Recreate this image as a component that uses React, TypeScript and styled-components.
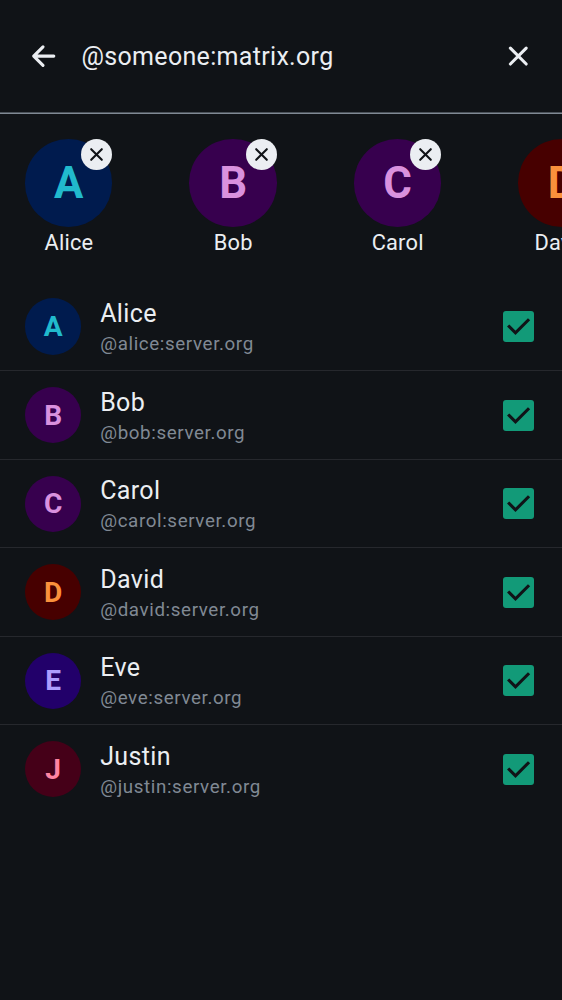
import React from "react";
import styled, { createGlobalStyle } from "styled-components";

const GlobalStyle = createGlobalStyle`
  * { box-sizing: border-box; }
  body {
    margin: 0;
    background: #101317;
    color: #ebeef2;
    font-family: Roboto, "Liberation Sans", sans-serif;
    overflow: hidden;
  }
`;

const Screen = styled.main`
  height: 1000px;
  overflow: hidden;
  display: flex;
  flex-direction: column;
  background: #101317;
`;

const SearchBar = styled.header`
  flex: none;
  height: 114px;
  padding: 0 25px;
  display: flex;
  align-items: center;
  border-bottom: 1px solid #808994;
  box-shadow: inset 0 -1px #4b525a;
`;

const IconButton = styled.button`
  width: 37.5px;
  height: 37.5px;
  padding: 0;
  border: 0;
  background: none;
  color: #ebeef2;
  flex: none;
  svg { display: block; }
`;

const Query = styled.div`
  flex: 1;
  padding-left: 19px;
  font-size: 25px;
  line-height: 37px;
  letter-spacing: 0.32px;
`;

const Selected = styled.section`
  flex: none;
  height: 168.6px;
  padding: 25.2px 0 0 25px;
  display: flex;
  gap: 77px;
`;

const Chip = styled.div`
  position: relative;
  flex: none;
  width: 87.4px;
  display: flex;
  flex-direction: column;
  align-items: center;
`;

const Avatar = styled.div<{ $size: number; $font: number; $bg: string; $fg: string }>`
  flex: none;
  width: ${(p) => p.$size}px;
  height: ${(p) => p.$size}px;
  padding-top: 1.2px;
  border-radius: 50%;
  display: flex;
  align-items: center;
  justify-content: center;
  background: ${(p) => p.$bg};
  color: ${(p) => p.$fg};
  font-size: ${(p) => p.$font}px;
  line-height: 1;
  font-weight: 700;
`;

const ChipName = styled.div`
  padding-left: 0.4px;
  font-size: 21.8px;
  line-height: 32px;
  letter-spacing: 0.22px;
`;

const Remove = styled.button`
  position: absolute;
  top: 0;
  right: 0;
  width: 31.2px;
  height: 31.2px;
  padding: 0;
  border: 0;
  border-radius: 50%;
  display: flex;
  align-items: center;
  justify-content: center;
  background: #ebeef2;
  color: #101317;
`;

const List = styled.ul`
  margin: 0;
  padding: 0;
  list-style: none;
`;

const Row = styled.li`
  height: 88.55px;
  padding: 0.4px 28px 0 25px;
  display: flex;
  align-items: center;
  border-bottom: 1px solid #26282d;
  &:last-child { border-bottom-color: transparent; }
`;

const Details = styled.div`
  flex: 1;
  padding: 1px 0 0 19px;
`;

const Name = styled.div`
  font-size: 25px;
  line-height: 34px;
  letter-spacing: 0.36px;
`;

const UserId = styled.div`
  font-size: 18.75px;
  line-height: 26px;
  letter-spacing: 0.62px;
  color: #808994;
`;

const Checkbox = styled.div`
  flex: none;
  width: 31.2px;
  height: 31.2px;
  border-radius: 3px;
  background: #129a78;
  svg { display: block; }
`;

type User = { name: string; bg: string; fg: string };

const users: User[] = [
  { name: "Alice", bg: "#001b4e", fg: "#21bacd" },
  { name: "Bob", bg: "#37004e", fg: "#d991de" },
  { name: "Carol", bg: "#37004e", fg: "#d991de" },
  { name: "David", bg: "#470000", fg: "#fa913c" },
  { name: "Eve", bg: "#22006a", fg: "#ad9cfe" },
  { name: "Justin", bg: "#450018", fg: "#ff84a2" },
];

export default function App() {
  return (
    <>
      <GlobalStyle />
      <Screen>
        <SearchBar>
          <IconButton aria-label="Back">
            <svg width="37.5" height="37.5" viewBox="0 0 37.5 37.5" fill="none" stroke="currentColor" strokeWidth="3.1" strokeLinecap="round" strokeLinejoin="round">
              <path d="M18 8.8 8.7 18.1 18 27.4M8.7 18.1H28.8" />
            </svg>
          </IconButton>
          <Query>@someone:matrix.org</Query>
          <IconButton aria-label="Clear">
            <svg width="37.5" height="37.5" viewBox="0 0 37.5 37.5" fill="none" stroke="currentColor" strokeWidth="3.1" strokeLinecap="round">
              <path d="m10.4 10.2 15.8 15.8m0-15.8-15.8 15.8" />
            </svg>
          </IconButton>
        </SearchBar>
        <Selected>
          {users.slice(0, 4).map((u) => (
            <Chip key={u.name}>
              <Avatar $size={87.4} $font={43.7} $bg={u.bg} $fg={u.fg}>{u.name[0]}</Avatar>
              <ChipName>{u.name}</ChipName>
              <Remove aria-label={`Remove ${u.name}`}>
                <svg width="25" height="25" viewBox="0 0 25 25" fill="none" stroke="currentColor" strokeWidth="2.1" strokeLinecap="round">
                  <path d="m7.2 7.2 10.6 10.6m0-10.6L7.2 17.8" />
                </svg>
              </Remove>
            </Chip>
          ))}
        </Selected>
        <List>
          {users.map((u) => (
            <Row key={u.name}>
              <Avatar $size={56.2} $font={28.1} $bg={u.bg} $fg={u.fg}>{u.name[0]}</Avatar>
              <Details>
                <Name>{u.name}</Name>
                <UserId>@{u.name.toLowerCase()}:server.org</UserId>
              </Details>
              <Checkbox role="checkbox" aria-checked="true" aria-label={u.name}>
                <svg width="31.2" height="31.2" viewBox="0 0 20 20" fill="none" stroke="#101317" strokeWidth="2" strokeLinecap="square">
                  <path d="m4 10 4 4 8-8" />
                </svg>
              </Checkbox>
            </Row>
          ))}
        </List>
      </Screen>
    </>
  );
}
